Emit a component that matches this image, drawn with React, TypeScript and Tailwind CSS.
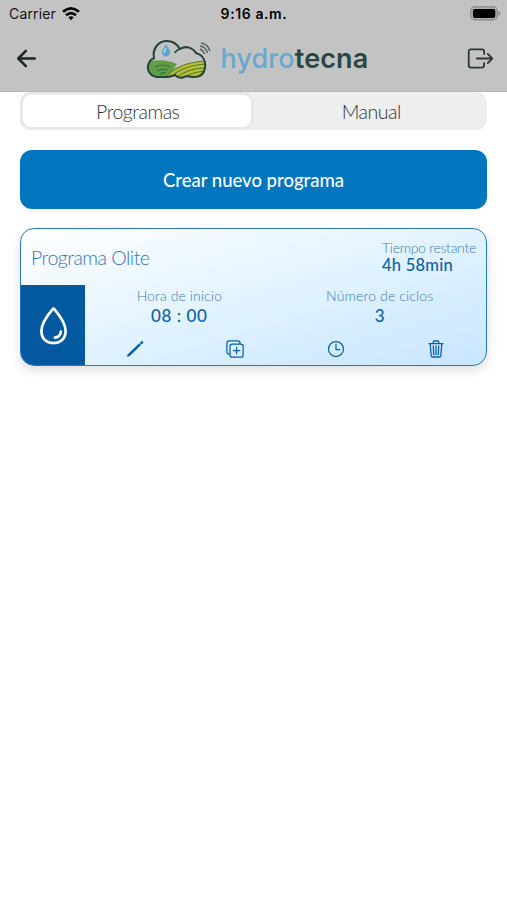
import React, { useState } from 'react';
import {
  IoArrowBack,
  IoDuplicateOutline,
  IoExitOutline,
  IoTimeOutline,
  IoWaterOutline,
} from 'react-icons/io5';

interface Program {
  name: string;
  remaining: string;
  start: string;
  cycles: number;
}

const program: Program = {
  name: 'Programa Olite',
  remaining: '4h 58min',
  start: '08 : 00',
  cycles: 3,
};

function WifiIcon() {
  return (
    <svg viewBox="0 0 18 14" className="h-[14px] w-[18px]" fill="none" stroke="#050505" strokeWidth="2.7">
      <path d="M1 4.7 Q9 -1.9 17 4.7" />
      <path d="M4 8.2 Q9 3.9 14 8.2" />
      <path d="M6.3 10.3 Q9 8.2 11.7 10.3 L9 13.2 Z" fill="#050505" stroke="none" />
    </svg>
  );
}

function BatteryIcon() {
  return (
    <svg viewBox="0 0 31 15" className="h-[15px] w-[31px]">
      <rect x="0.7" y="0.9" width="26.6" height="13" rx="4" fill="#b0b0b0" stroke="#858585" strokeWidth="1.1" />
      <rect x="2.9" y="3" width="22.4" height="9" rx="2" fill="#000" />
      <path d="M28.6 5 Q32 7.4 28.6 9.8 Z" fill="#858585" />
    </svg>
  );
}

function CloudLogo() {
  return (
    <svg viewBox="0 0 66 42" className="h-[42px] w-[66px]" fill="none">
      <defs>
        <clipPath id="cloud">
          <path d="M11 38 C3 37 0 29 3 24 C4 21 6 20 8 19 C6 9 13 2 21 2 C27 2 31 5 34 10 C40 6 47 9 50 14 C57 16 60 22 59 29 C58 35 54 38 48 38 C43 38 41 36 38 38 C34 40 31 38 29 36 C26 37 24 38 20 38 Z" />
        </clipPath>
      </defs>
      <g clipPath="url(#cloud)">
        <path d="M0 24 Q14 18 31 25 L21 40 H0 Z" fill="#5f9f45" />
        <path d="M19 40 C27 28 40 23 62 22 V42 H19 Z" fill="#b3bf39" />
        <path d="M9 28 Q17 24 24 28 M11 32 Q17 29 22 31 M14 35 Q17 33 20 34" stroke="#38733b" strokeWidth="1.1" />
        <path d="M20 38 C29 27 43 23 60 22 M25 38 C34 29 46 26 60 25 M31 38 C39 32 48 29 60 29 M38 39 C44 34 51 33 59 32" stroke="#5f7630" strokeWidth="1.1" />
      </g>
      <path d="M11 38 C3 37 0 29 3 24 C4 21 6 20 8 19 C6 9 13 2 21 2 C27 2 31 5 34 10 C40 6 47 9 50 14 C57 16 60 22 59 29 C58 35 54 38 48 38 C43 38 41 36 38 38 C34 40 31 38 29 36 C26 37 24 38 20 38 Z" stroke="#26433d" strokeWidth="2" />
      <path d="M34 10 Q30 11 29 14" stroke="#26433d" strokeWidth="1.7" />
      <path d="M20 5 C18 9 15.5 11 16 14 C16.5 18.5 23.5 18.5 24 14 C24.5 11 22 9 20 5 Z" fill="#5aa5d4" />
      <path d="M20 9 C19 11 18 12 18.2 14" stroke="#b9d7e5" strokeWidth="1.5" />
      <path d="M55 4 Q62 5 64 12 M54 7 Q60 8 61.5 14 M54 10 Q57 11 58.5 15" stroke="#52635f" strokeWidth="1.4" />
    </svg>
  );
}

function PencilIcon() {
  return (
    <svg viewBox="0 0 20 20" className="h-5 w-5" fill="#0660a8">
      <path d="M1.9 18.1 L2.8 15.2 L14.3 4.2 L16 5.9 L4.8 17.1 Z" />
      <path d="M14.8 3.7 L16.2 2.4 Q17.2 1.7 18 2.5 Q18.6 3.3 17.9 4.2 L16.5 5.4 Z" />
    </svg>
  );
}

function TrashIcon() {
  return (
    <svg
      viewBox="0 0 20 20"
      className="h-5 w-5"
      fill="none"
      stroke="currentColor"
      strokeWidth="1.3"
      strokeLinecap="round"
      strokeLinejoin="round"
    >
      <path d="M3 4.6 H17 M7.3 4.4 V2.7 Q7.3 2 8 2 H12 Q12.7 2 12.7 2.7 V4.4" />
      <path d="M4.2 4.8 L5.2 17 Q5.3 18 6.3 18 H13.7 Q14.7 18 14.8 17 L15.8 4.8" />
      <path d="M7.3 7 L7.7 15.7 M10 7 V15.7 M12.7 7 L12.3 15.7" />
    </svg>
  );
}

function Header() {
  return (
    <header className="h-[92px] border-b border-[#b7b7b7] bg-[#c3c3c3]">
      <div className="grid h-[27px] grid-cols-3 items-center pl-[9px] pr-[6px] font-['Inter'] text-[14px] text-[#151515]">
        <div className="flex items-center gap-[6px]">
          <span className="tracking-[0.15px]">Carrier</span>
          <WifiIcon />
        </div>
        <span className="pr-[2px] text-center font-semibold tracking-[0.6px] text-black">9:16 a.m.</span>
        <div className="flex justify-end">
          <BatteryIcon />
        </div>
      </div>
      <div className="flex h-[62px] items-center justify-between pl-[13px] pr-3">
        <button aria-label="Volver">
          <IoArrowBack className="h-[27px] w-[27px] text-[#202525]" />
        </button>
        <div className="flex items-center gap-[9px] pl-[8px] pt-[3px]">
          <CloudLogo />
          <span className="w-[148px] whitespace-nowrap pb-[2px] font-['Inter'] text-[27px] font-semibold leading-[34px] tracking-[0.1px] text-[#294844]">
            <span className="font-medium text-[#68a9cf]">hydro</span>tecna
          </span>
        </div>
        <button aria-label="Salir">
          <IoExitOutline className="h-[29px] w-[29px] text-[#303535]" />
        </button>
      </div>
    </header>
  );
}

function ProgramCard({ item }: { item: Program }) {
  return (
    <article className="mt-[19px] flex h-[138px] flex-col overflow-hidden rounded-[14px] border-[1.5px] border-[#2878b5] bg-linear-to-br from-white via-[#e2f3ff] to-[#c8e6ff] text-[#0962a8] shadow-[0_4px_12px_rgba(0,0,0,0.13)]">
      <div className="flex h-[56px] shrink-0 justify-between pl-[10px] pr-[10px]">
        <h2 className="pt-[17px] text-[19.5px] font-light leading-6 tracking-[-0.5px] text-[#3279b3]">{item.name}</h2>
        <div className="w-[94px] whitespace-nowrap pt-[10px]">
          <p className="text-[14px] font-light leading-[17px] tracking-[-0.28px] text-[#397fb6]">Tiempo restante</p>
          <p className="text-[16.5px] font-medium leading-[18px] tracking-[0.25px]">{item.remaining}</p>
        </div>
      </div>
      <div className="flex flex-1">
        <div className="flex w-[64px] items-center justify-center bg-[#02599f]">
          <IoWaterOutline className="h-[43px] w-[43px] text-white" />
        </div>
        <div className="flex flex-1 flex-col">
          <div className="grid grid-cols-2 pt-px text-center">
            <div className="pr-[12px]">
              <p className="text-[14px] font-light leading-[19px] tracking-[0.1px] text-[#397fb6]">Hora de inicio</p>
              <p className="text-[17px] font-medium leading-[22px] tracking-[0.6px]">{item.start}</p>
            </div>
            <div className="pr-[12px]">
              <p className="text-[14px] font-light leading-[19px] tracking-[0.15px] text-[#397fb6]">Número de ciclos</p>
              <p className="text-[17px] font-medium leading-[22px]">{item.cycles}</p>
            </div>
          </div>
          <div className="grid h-[38px] grid-cols-4 place-items-center pt-[5px]">
            <button aria-label="Editar"><PencilIcon /></button>
            <button aria-label="Duplicar"><IoDuplicateOutline className="h-5 w-5" /></button>
            <button aria-label="Historial"><IoTimeOutline className="h-5 w-5" /></button>
            <button aria-label="Eliminar"><TrashIcon /></button>
          </div>
        </div>
      </div>
    </article>
  );
}

export default function App() {
  const [tab, setTab] = useState('Programas');

  return (
    <div className="h-[900px] w-[507px] overflow-hidden bg-white font-['Lato',sans-serif]">
      <Header />
      <main className="px-5">
        <div className="flex h-[38px] rounded-[11px] bg-[#eeeeee] text-[19.5px] font-light tracking-[-0.5px] text-[#333333]">
          {['Programas', 'Manual'].map((name) => (
            <button
              key={name}
              onClick={() => setTab(name)}
              className={
                tab === name
                  ? 'h-[38px] w-1/2 rounded-[11px] border-[3px] border-[#e8e8e8] bg-white pl-[2px] pt-px'
                  : 'h-[38px] w-1/2 rounded-[11px] pl-[2px] pt-px'
              }
            >
              {name}
            </button>
          ))}
        </div>
        <button className="mt-5 h-[59px] w-full rounded-[12px] bg-[#0076be] pt-[2px] text-[18.5px] font-medium text-white">
          Crear nuevo programa
        </button>
        <ProgramCard item={program} />
      </main>
    </div>
  );
}
